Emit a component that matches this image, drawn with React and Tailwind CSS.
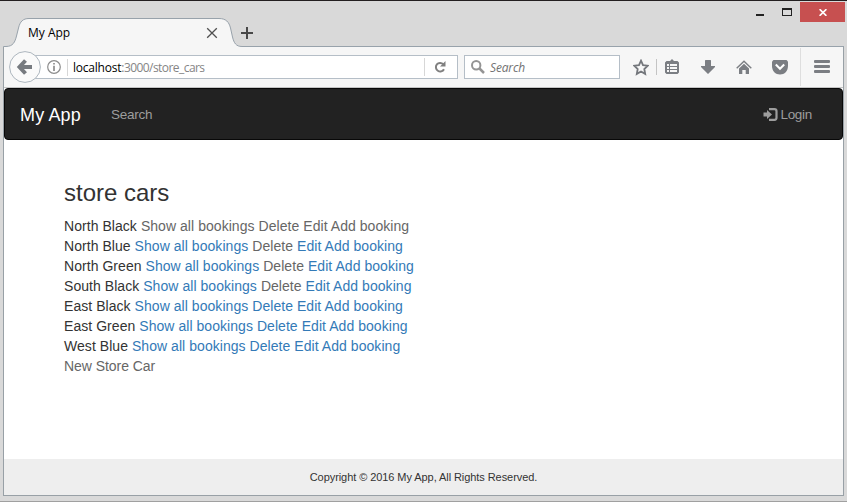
import React from "react";

const cars = [
  ["North Black", ["g", "g", "g", "g"]],
  ["North Blue", ["b", "g", "b", "b"]],
  ["North Green", ["b", "g", "b", "b"]],
  ["South Black", ["b", "g", "b", "b"]],
  ["East Black", ["b", "b", "b", "b"]],
  ["East Green", ["b", "b", "b", "b"]],
  ["West Blue", ["b", "b", "b", "b"]],
];
const actions = ["Show all bookings", "Delete", "Edit", "Add booking"];
const tones = { g: "text-[#666666]", b: "text-[#337ab7]" };

function TitleBar() {
  return (
    <header className="flex h-[46px] shrink-0">
      <div className="relative h-[46px] w-[243px] shrink-0">
        <svg className="absolute inset-0" width="243" height="46" viewBox="0 0 243 46">
          <path d="M3.5 46V45.500H6C13 45.500 15 41 16.500 35L18.500 27C20 20.500 23 17.500 29 17.500H219C226 17.500 229 21 230.500 27L232.500 36C234 42 236 45.500 242 45.500H243V46Z" fill="#f6f6f6" />
          <path d="M3.500 46V45.500H6C13 45.500 15 41 16.500 35L18.500 27C20 20.500 23 17.500 29 17.500H219C226 17.500 229 21 230.500 27L232.500 36C234 42 236 45.500 242 45.500H243" fill="none" stroke="#98a2ab" />
        </svg>
        <div className="relative flex h-full items-center justify-between pt-[18px] pr-[25px] pl-[28px]">
          <span className="text-[12px] leading-4 text-black">My App</span>
          <svg width="12" height="12" viewBox="0 0 12 12" stroke="#505050" strokeWidth="1.300">
            <path d="M1.200 1.200l9.600 9.600M10.800 1.200l-9.600 9.600" />
          </svg>
        </div>
      </div>
      <div className="mr-[3px] flex flex-1 items-start justify-between border-b border-[#98a2ab]">
        <svg className="mt-[26px] ml-[-2px]" width="12" height="12" viewBox="0 0 12 12" fill="#484848">
          <path d="M5 0h2v5h5v2H7v5H5V7H0V5h5z" />
        </svg>
        <div className="mr-[-1px] flex h-[21px] items-start">
          <svg className="mt-[12px] mr-[18px]" width="8" height="3" viewBox="0 0 8 3"><path d="M0 1h8v2H0z" fill="#222" /></svg>
          <svg className="mt-[7px] mr-[8px]" width="10" height="8" viewBox="0 0 10 8"><path fillRule="evenodd" d="M0 0h10v8H0zM1 2v5h8V2z" fill="#222" /></svg>
          <div className="mt-px flex h-[20px] w-[45px] items-center justify-center bg-[#c75050]">
            <svg width="8" height="7" viewBox="0 0 8 7" stroke="#fff" strokeWidth="1.700"><path d="M.6.200l6.800 6.600M7.400.200L.6 6.800" /></svg>
          </div>
        </div>
      </div>
    </header>
  );
}

function Toolbar() {
  return (
    <div className="flex h-[41px] shrink-0 items-center border-b border-[#c4c4c4] bg-[#f6f6f6]">
      <svg className="z-10 ml-[5px] shrink-0" width="32" height="32" viewBox="0 0 32 32">
        <circle cx="16" cy="16" r="15.400" fill="#fafafa" stroke="#adb6be" />
        <path d="M16.500 9.500L10.500 16l6 6.500M11 16h12" fill="none" stroke="#777b80" strokeWidth="4" />
      </svg>
      <div className="ml-[-8px] flex h-[24px] w-[425px] items-center border border-[#b5bec7] bg-white">
        <svg className="ml-[13px]" width="14" height="14" viewBox="0 0 14 14">
          <circle cx="7" cy="7" r="6.300" fill="none" stroke="#8c8c8c" strokeWidth="1.200" />
          <path d="M6.200 3h1.600v1.600H6.200zM6.200 5.800h1.600V11H6.200z" fill="#858585" />
        </svg>
        <i className="ml-[6px] h-[17px] w-px bg-[#d7d7d7]" />
        <span className="ml-[5px] flex-1 translate-y-px pb-px text-[12px] leading-4 tracking-[-0.56px] text-[#858585]"><span className="tracking-[-0.22px] text-black">localhost</span>:3000/store_cars</span>
        <i className="mr-[9px] h-[18px] w-px bg-[#d7d7d7]" />
        <svg className="mr-[11px]" width="12" height="12" viewBox="0 0 12 12">
          <path d="M9.200 3.100A4.300 4.300 0 1 0 10 8.200" fill="none" stroke="#808080" strokeWidth="2" />
          <path d="M11.500 0v5.500H6z" fill="#808080" />
        </svg>
      </div>
      <div className="ml-[6px] flex h-[24px] w-[156px] items-center border border-[#b5bec7] bg-white">
        <svg className="ml-[6px]" width="14" height="14" viewBox="0 0 14 14" fill="none" stroke="#949494">
          <circle cx="5.200" cy="5.200" r="4.200" strokeWidth="2" />
          <path d="M8.500 8.500l4.500 4.500" strokeWidth="2.500" />
        </svg>
        <span className="ml-[5px] translate-y-px text-[12px] leading-4 tracking-[-0.15px] text-[#727272] italic">Search</span>
      </div>
      <div className="ml-[13px] flex items-center">
        <svg width="16" height="17" viewBox="0 0 16 17"><path d="M8 1.700l2 4.400 4.800.600-3.500 3.300.900 4.900L8 12.500l-4.200 2.400.900-4.900L1.200 6.700 6 6.100z" fill="none" stroke="#74777c" strokeWidth="1.800" /></svg>
        <i className="ml-[7px] h-[16px] w-px bg-[#c4c4c4]" />
        <svg className="ml-[8px]" width="14" height="16" viewBox="0 0 14 16">
          <path d="M5 2l2-2 2 2h3.500L14 3.500v10L12.500 15h-11L0 13.500v-10L1.500 2z" fill="#7b7e83" />
          <path d="M2 5h2v2H2zM5 5h7v2H5zM2 8h2v2H2zM5 8h7v2H5zM2 11h2v2H2zM5 11h7v2H5z" fill="#f6f6f6" />
        </svg>
        <svg className="ml-[22px]" width="14" height="14" viewBox="0 0 14 14"><path d="M4.500 0h5l.5.500V6h4v1l-7 7-7-7V6h4V.5z" fill="#7b7e83" /></svg>
        <svg className="ml-[21px]" width="16" height="15" viewBox="0 0 16 15">
          <path d="M.7 8.200L8 1.200l7.300 7" fill="none" stroke="#7b7e83" strokeWidth="1.400" />
          <path d="M8 3.700l5 4.800V14H9.700v-4H6.300v4H3V8.500z" fill="#7b7e83" />
        </svg>
        <svg className="ml-[20px]" width="16" height="15" viewBox="0 0 16 15">
          <path d="M1.500 0h13L16 1.500V6c0 5-3.500 8.500-8 8.500S0 11 0 6V1.500z" fill="#7b7e83" />
          <path d="M3.800 4.600L8 8.700l4.200-4.100" fill="none" stroke="#fff" strokeWidth="2.100" />
        </svg>
        <i className="ml-[12px] h-[38px] w-px bg-[#dedede]" />
        <svg className="ml-[13px]" width="16" height="14" viewBox="0 0 16 14" fill="#7b7e83">
          <rect width="16" height="3" rx="1" /><rect y="5" width="16" height="3" rx="1" /><rect y="10" width="16" height="3" rx="1" />
        </svg>
      </div>
    </div>
  );
}

function Page() {
  return (
    <div className="flex flex-1 flex-col bg-white font-['Liberation_Sans',Arial,sans-serif] text-[14px] leading-5 text-[#333]">
      <nav className="flex h-[52px] shrink-0 items-center rounded border border-[#080808] bg-[#222] pt-px text-[#9d9d9d]">
        <span className="ml-[15px] text-[18px] tracking-[0.15px] text-white">My App</span>
        <span className="ml-[30px] text-[13.500px] tracking-[-0.25px]">Search</span>
        <span className="mr-[30px] ml-auto flex items-center">
          <svg className="-mt-px" width="15" height="13" viewBox="0 0 15 13">
            <path d="M.5 4.500h3.500V2l5 4.500-5 4.500V8.500H.5z" fill="#9d9d9d" />
            <path d="M6 1.200h5.500q2 0 2 2v6.600q0 2-2 2H6" fill="none" stroke="#9d9d9d" strokeWidth="2.200" />
          </svg>
          <span className="ml-[2px] text-[13.500px] tracking-[-0.3px]">Login</span>
        </span>
      </nav>
      <main className="flex-1 pt-[38px] pl-[60px]">
        <h1 className="mb-[8px] text-[24px] leading-[30px]">store cars</h1>
        {cars.map(([name, kinds]) => (
          <p key={name} className="tracking-[0.05px]">
            {name}
            {actions.map((a, i) => (
              <React.Fragment key={a}> <a className={tones[kinds[i]]}>{a}</a></React.Fragment>
            ))}
          </p>
        ))}
        <a className="block tracking-[-0.05px] text-[#666]">New Store Car</a>
      </main>
      <footer className="flex h-[36px] shrink-0 items-center justify-center bg-[#eee] text-[11px] tracking-[-0.07px]">
        Copyright © 2016 My App, All Rights Reserved.
      </footer>
    </div>
  );
}

export default function App() {
  return (
    <div className="flex h-[502px] w-[847px] flex-col overflow-hidden border-t border-b border-t-[#231f20] border-b-[#a0a0a0] bg-[#d9d9d9] font-['Open_Sans','Noto_Sans',sans-serif]">
      <TitleBar />
      <div className="mx-[3px] mb-[5px] flex flex-1 flex-col border-x border-b border-[#98a0a6]">
        <Toolbar />
        <Page />
      </div>
    </div>
  );
}
